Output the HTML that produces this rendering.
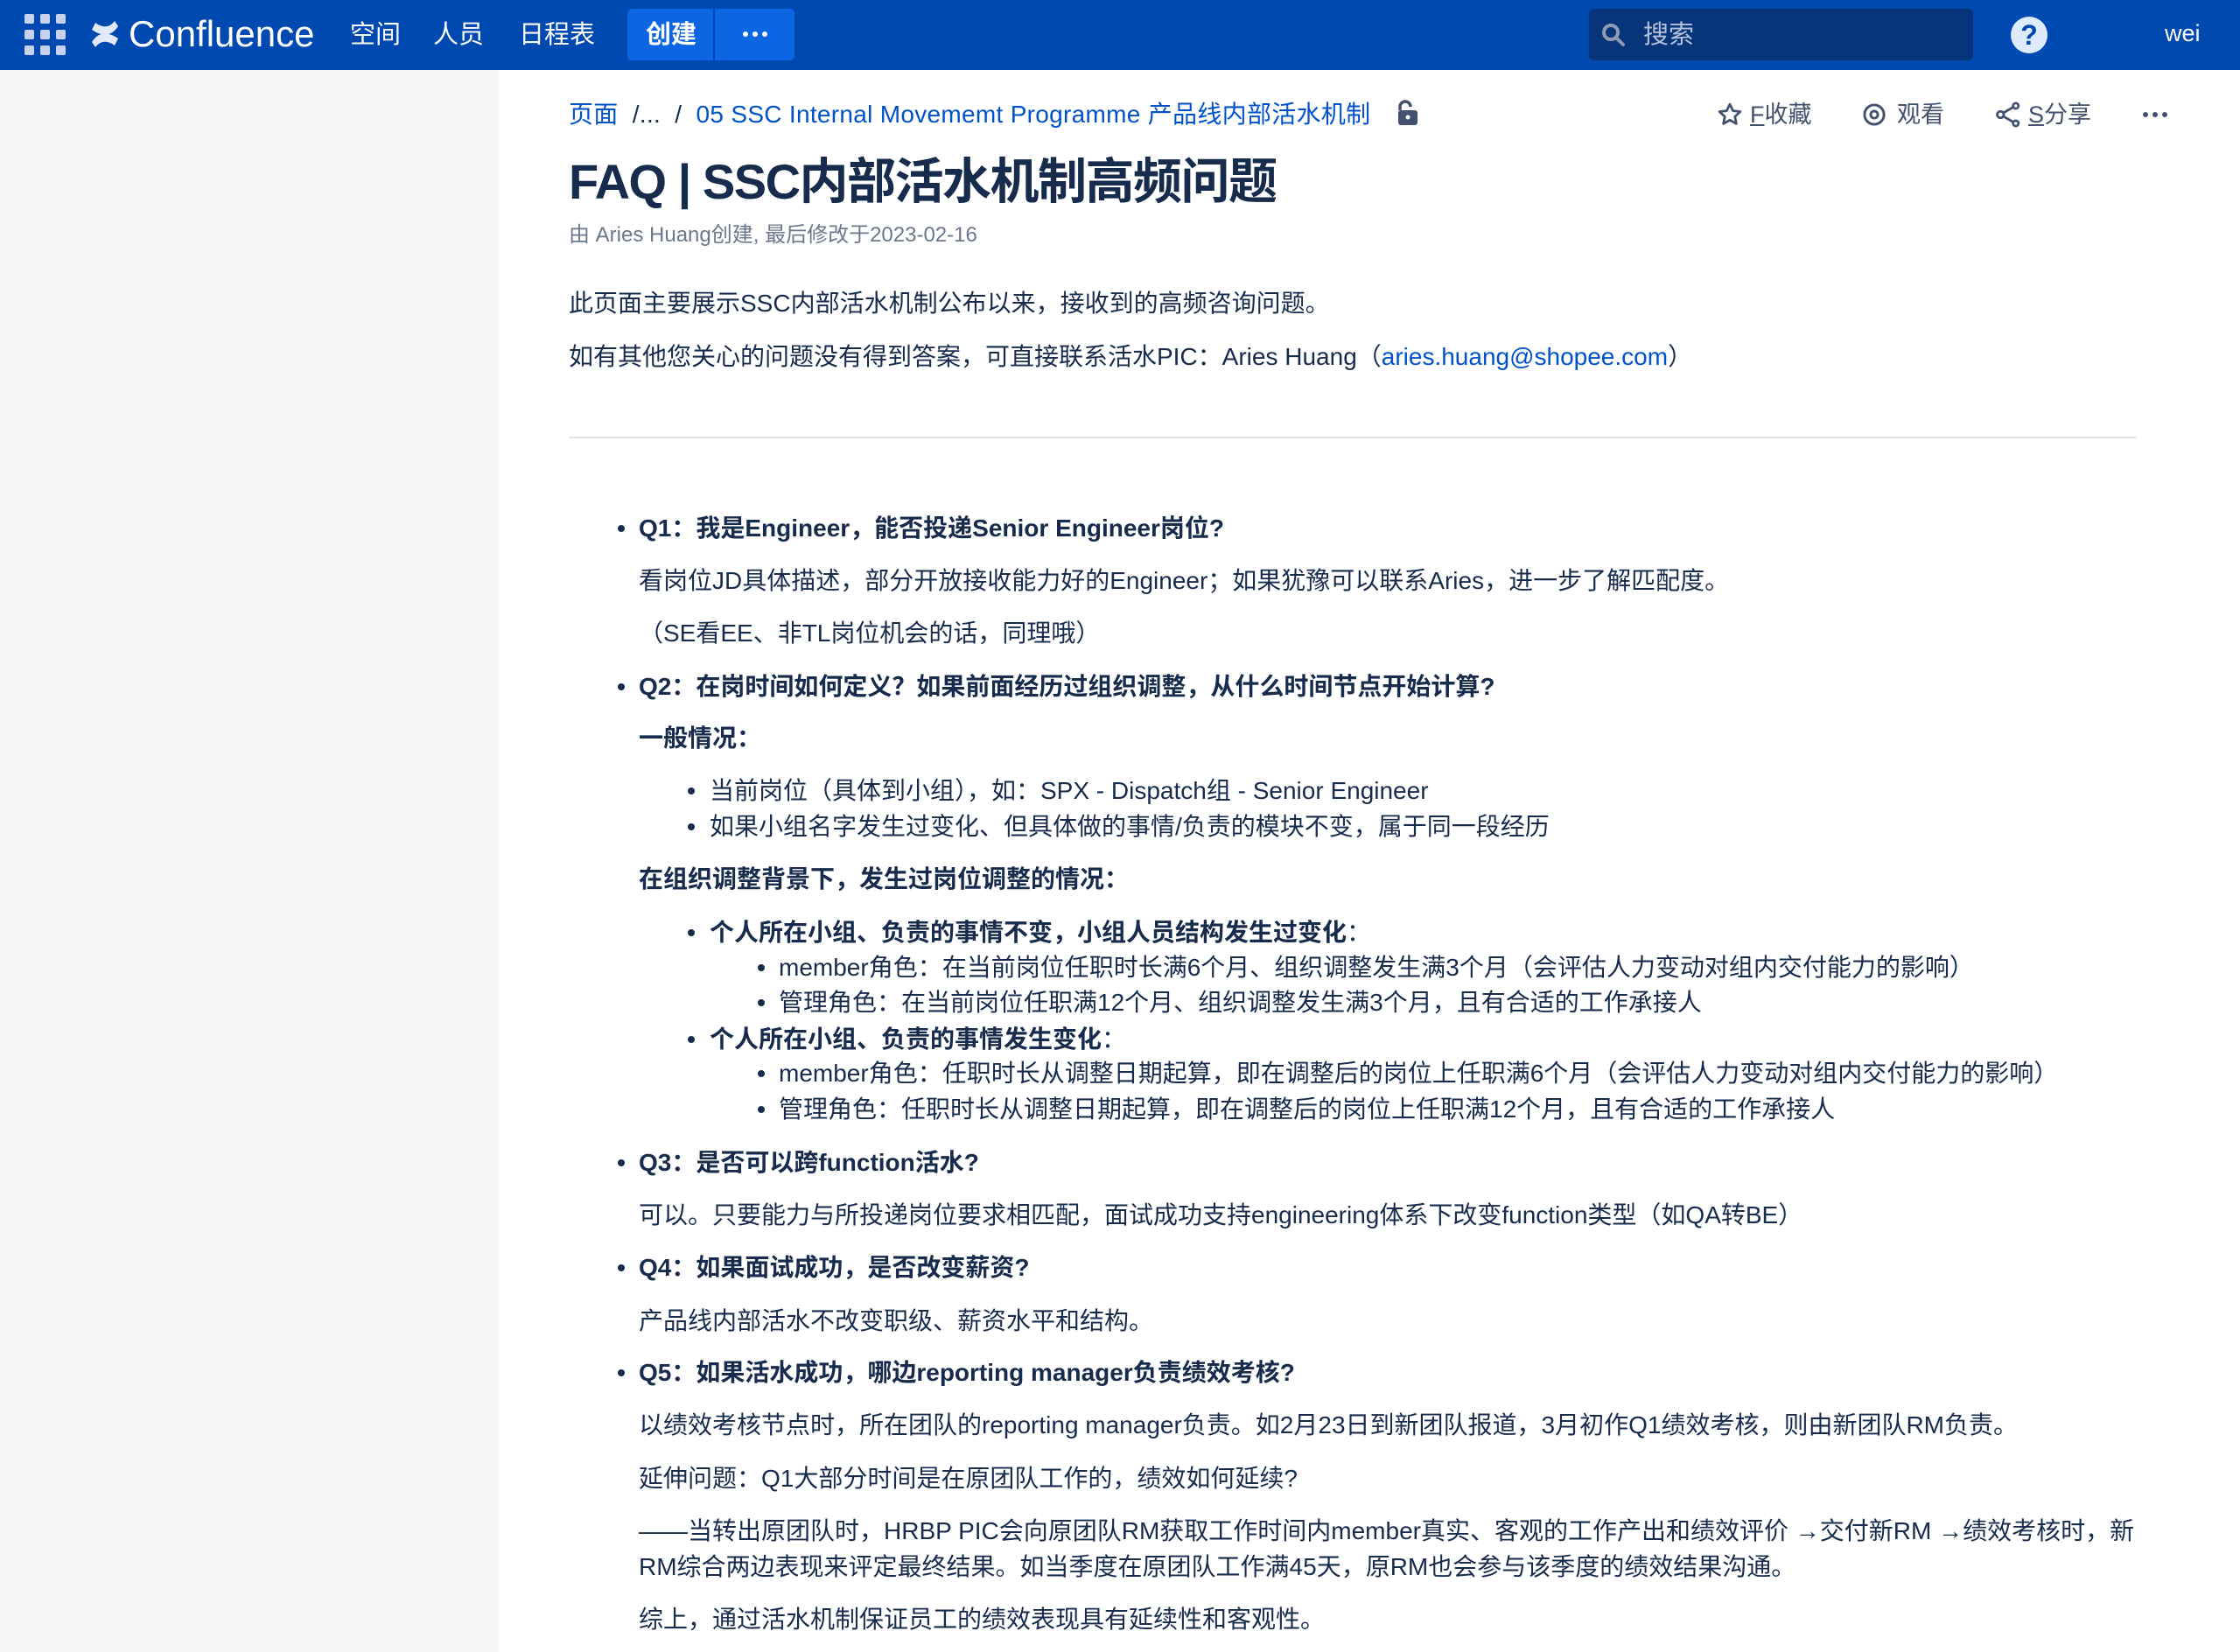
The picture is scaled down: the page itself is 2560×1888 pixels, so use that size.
<!DOCTYPE html>
<html><head><meta charset="utf-8">
<style>
*{margin:0;padding:0;box-sizing:border-box}
body{width:2560px;height:1888px;overflow:hidden;background:#fff;font-family:"Liberation Sans","Noto Sans CJK SC",sans-serif;color:#172b4d;position:relative}
.hdr{position:absolute;left:0;top:0;width:2560px;height:80px;background:#0049b0}
.side{position:absolute;left:0;top:80px;width:570px;height:1808px;background:#f4f5f7}
.a{position:absolute;white-space:nowrap}
.t{font-size:28px;line-height:40px}
.b{font-weight:bold}
.dot{position:absolute;width:8px;height:8px;border-radius:50%;background:#172b4d}
.nav{color:#fff;font-size:29px;line-height:40px;top:20px}
.lk{color:#0052cc}
.act{color:#42526e;font-size:27px;line-height:40px;top:111px}
.dots3{position:absolute;display:flex;gap:5px}
.dots3 i{display:block;width:6px;height:6px;border-radius:50%}
</style></head><body>
<div class="hdr"></div>
<div class="side"></div>
<svg class="a" style="left:26px;top:14px" width="52" height="52" viewBox="0 0 52 52" fill="#c7d3ee">
<rect x="2" y="2" width="11" height="11" rx="2"/><rect x="20" y="2" width="11" height="11" rx="2"/><rect x="38" y="2" width="11" height="11" rx="2"/>
<rect x="2" y="20" width="11" height="11" rx="2"/><rect x="20" y="20" width="11" height="11" rx="2"/><rect x="38" y="20" width="11" height="11" rx="2"/>
<rect x="2" y="38" width="11" height="11" rx="2"/><rect x="20" y="38" width="11" height="11" rx="2"/><rect x="38" y="38" width="11" height="11" rx="2"/>
</svg>
<svg class="a" style="left:103px;top:22px" width="34" height="34" viewBox="0 0 34 34" fill="#e3e9f7">
<path d="M2 26 C10 14 20 14 32 22 L28 30 C20 24 12 24 6 32 Z"/><path d="M32 8 C24 20 14 20 2 12 L6 4 C14 10 22 10 28 2 Z"/>
</svg>
<div class="a" style="left:147px;top:12px;color:#fff;font-size:42px;line-height:54px">Confluence</div>
<div class="a nav" style="left:400px">空间</div>
<div class="a nav" style="left:495px">人员</div>
<div class="a nav" style="left:593px">日程表</div>
<div class="a" style="left:717px;top:10px;width:191px;height:59px;background:#0c66e4;border-radius:5px"></div>
<div class="a" style="left:815px;top:10px;width:2px;height:59px;background:#0049b0"></div>
<div class="a b" style="left:738px;top:20px;color:#fff;font-size:29px;line-height:40px">创建</div>
<div class="dots3" style="left:849px;top:36px"><i style="background:#fff"></i><i style="background:#fff"></i><i style="background:#fff"></i></div>
<div class="a" style="left:1816px;top:10px;width:439px;height:59px;background:#07347a;border-radius:5px"></div>
<svg class="a" style="left:1829px;top:25px" width="30" height="30" viewBox="0 0 30 30"><circle cx="12" cy="12" r="8" stroke="#8f9bb3" stroke-width="4" fill="none"/><path d="M18 18 L26 26" stroke="#8f9bb3" stroke-width="4" stroke-linecap="round"/></svg>
<div class="a" style="left:1878px;top:20px;color:#b6c2dc;font-size:29px;line-height:40px">搜索</div>
<div class="a" style="left:2298px;top:19px;width:42px;height:42px;border-radius:50%;background:#deebff;color:#0049b0;font-weight:bold;font-size:32px;line-height:42px;text-align:center">?</div>
<div class="a" style="left:2474px;top:18px;color:#fff;font-size:27px;line-height:40px">wei</div>

<div class="a" style="left:650px;top:111px;font-size:28px;line-height:40px;letter-spacing:0.3px"><span class="lk">页面</span> <span style="color:#172b4d">&nbsp;/...&nbsp; /&nbsp;</span> <span class="lk">05 SSC Internal Movememt Programme 产品线内部活水机制</span></div>
<svg class="a" style="left:1596px;top:114px" width="26" height="30" viewBox="0 0 26 30"><path d="M4 12 V8 a6 6 0 0 1 12 0" stroke="#42526e" stroke-width="3.5" fill="none"/><rect x="2" y="12" width="22" height="17" rx="3" fill="#42526e"/><circle cx="13" cy="20" r="2.5" fill="#fff"/></svg>
<svg class="a" style="left:1962px;top:116px" width="30" height="30" viewBox="0 0 24 24"><path d="M12 2.5l2.9 6 6.6.8-4.9 4.5 1.3 6.5L12 17l-5.9 3.3 1.3-6.5L2.5 9.3l6.6-.8z" fill="none" stroke="#42526e" stroke-width="2.2" stroke-linejoin="round"/></svg>
<div class="a act" style="left:2000px"><u>F</u>收藏</div>
<svg class="a" style="left:2128px;top:117px" width="28" height="28" viewBox="0 0 24 24"><circle cx="12" cy="12" r="9.5" fill="none" stroke="#42526e" stroke-width="2.5"/><circle cx="12" cy="12" r="3.5" fill="none" stroke="#42526e" stroke-width="2.5"/></svg>
<div class="a act" style="left:2168px">观看</div>
<svg class="a" style="left:2280px;top:116px" width="30" height="30" viewBox="0 0 24 24"><circle cx="5" cy="12" r="3" fill="none" stroke="#42526e" stroke-width="2.2"/><circle cx="19" cy="4" r="2.5" fill="none" stroke="#42526e" stroke-width="2.2"/><circle cx="19" cy="20" r="2.5" fill="none" stroke="#42526e" stroke-width="2.2"/><path d="M7.5 10.5L17 5M7.5 13.5L17 19" stroke="#42526e" stroke-width="2.2"/></svg>
<div class="a act" style="left:2318px"><u>S</u>分享</div>
<div class="dots3" style="left:2449px;top:128px"><i style="background:#42526e"></i><i style="background:#42526e"></i><i style="background:#42526e"></i></div>

<div class="a b" style="left:650px;top:173px;font-size:56px;line-height:70px;letter-spacing:-1.5px">FAQ | SSC内部活水机制高频问题</div>
<div class="a" style="left:650px;top:254px;font-size:24px;line-height:30px;color:#6b778c">由 Aries Huang创建, 最后修改于2023-02-16</div>

<div class="a t" style="left:650px;top:327px">此页面主要展示SSC内部活水机制公布以来，接收到的高频咨询问题。</div>
<div class="a t" style="left:650px;top:388px">如有其他您关心的问题没有得到答案，可直接联系活水PIC：Aries Huang（<span class="lk">aries.huang@shopee.com</span>）</div>
<div class="a" style="left:650px;top:499px;width:1791px;height:2px;background:#dfe1e6"></div>

<div class="dot" style="left:706px;top:600px"></div><div class="a t b" style="left:730px;top:584px">Q1：我是Engineer，能否投递Senior Engineer岗位?</div>
<div class="a t" style="left:730px;top:644px">看岗位JD具体描述，部分开放接收能力好的Engineer；如果犹豫可以联系Aries，进一步了解匹配度。</div>
<div class="a t" style="left:730px;top:704px">（SE看EE、非TL岗位机会的话，同理哦）</div>
<div class="dot" style="left:706px;top:781px"></div><div class="a t b" style="left:730px;top:765px">Q2：在岗时间如何定义？如果前面经历过组织调整，从什么时间节点开始计算?</div>
<div class="a t b" style="left:730px;top:824px">一般情况：</div>
<div class="dot" style="left:786px;top:900px"></div><div class="a t" style="left:811px;top:884px">当前岗位（具体到小组），如：SPX - Dispatch组 - Senior Engineer</div>
<div class="dot" style="left:786px;top:941px"></div><div class="a t" style="left:811px;top:925px">如果小组名字发生过变化、但具体做的事情/负责的模块不变，属于同一段经历</div>
<div class="a t b" style="left:730px;top:985px">在组织调整背景下，发生过岗位调整的情况：</div>
<div class="dot" style="left:786px;top:1062px"></div><div class="a t b" style="left:811px;top:1046px">个人所在小组、负责的事情不变，小组人员结构发生过变化<span style="font-weight:normal">：</span></div>
<div class="dot" style="left:866px;top:1102px"></div><div class="a t" style="left:890px;top:1086px">member角色：在当前岗位任职时长满6个月、组织调整发生满3个月（会评估人力变动对组内交付能力的影响）</div>
<div class="dot" style="left:866px;top:1142px"></div><div class="a t" style="left:890px;top:1126px">管理角色：在当前岗位任职满12个月、组织调整发生满3个月，且有合适的工作承接人</div>
<div class="dot" style="left:786px;top:1184px"></div><div class="a t b" style="left:811px;top:1168px">个人所在小组、负责的事情发生变化<span style="font-weight:normal">：</span></div>
<div class="dot" style="left:866px;top:1223px"></div><div class="a t" style="left:890px;top:1207px">member角色：任职时长从调整日期起算，即在调整后的岗位上任职满6个月（会评估人力变动对组内交付能力的影响）</div>
<div class="dot" style="left:866px;top:1264px"></div><div class="a t" style="left:890px;top:1248px">管理角色：任职时长从调整日期起算，即在调整后的岗位上任职满12个月，且有合适的工作承接人</div>
<div class="dot" style="left:706px;top:1325px"></div><div class="a t b" style="left:730px;top:1309px">Q3：是否可以跨function活水?</div>
<div class="a t" style="left:730px;top:1369px">可以。只要能力与所投递岗位要求相匹配，面试成功支持engineering体系下改变function类型（如QA转BE）</div>
<div class="dot" style="left:706px;top:1445px"></div><div class="a t b" style="left:730px;top:1429px">Q4：如果面试成功，是否改变薪资?</div>
<div class="a t" style="left:730px;top:1490px">产品线内部活水不改变职级、薪资水平和结构。</div>
<div class="dot" style="left:706px;top:1565px"></div><div class="a t b" style="left:730px;top:1549px">Q5：如果活水成功，哪边reporting manager负责绩效考核?</div>
<div class="a t" style="left:730px;top:1609px">以绩效考核节点时，所在团队的reporting manager负责。如2月23日到新团队报道，3月初作Q1绩效考核，则由新团队RM负责。</div>
<div class="a t" style="left:730px;top:1670px">延伸问题：Q1大部分时间是在原团队工作的，绩效如何延续?</div>
<div class="a t" style="left:730px;top:1730px">——当转出原团队时，HRBP PIC会向原团队RM获取工作时间内member真实、客观的工作产出和绩效评价 →交付新RM →绩效考核时，新</div>
<div class="a t" style="left:730px;top:1771px">RM综合两边表现来评定最终结果。如当季度在原团队工作满45天，原RM也会参与该季度的绩效结果沟通。</div>
<div class="a t" style="left:730px;top:1831px">综上，通过活水机制保证员工的绩效表现具有延续性和客观性。</div>
</body></html>
